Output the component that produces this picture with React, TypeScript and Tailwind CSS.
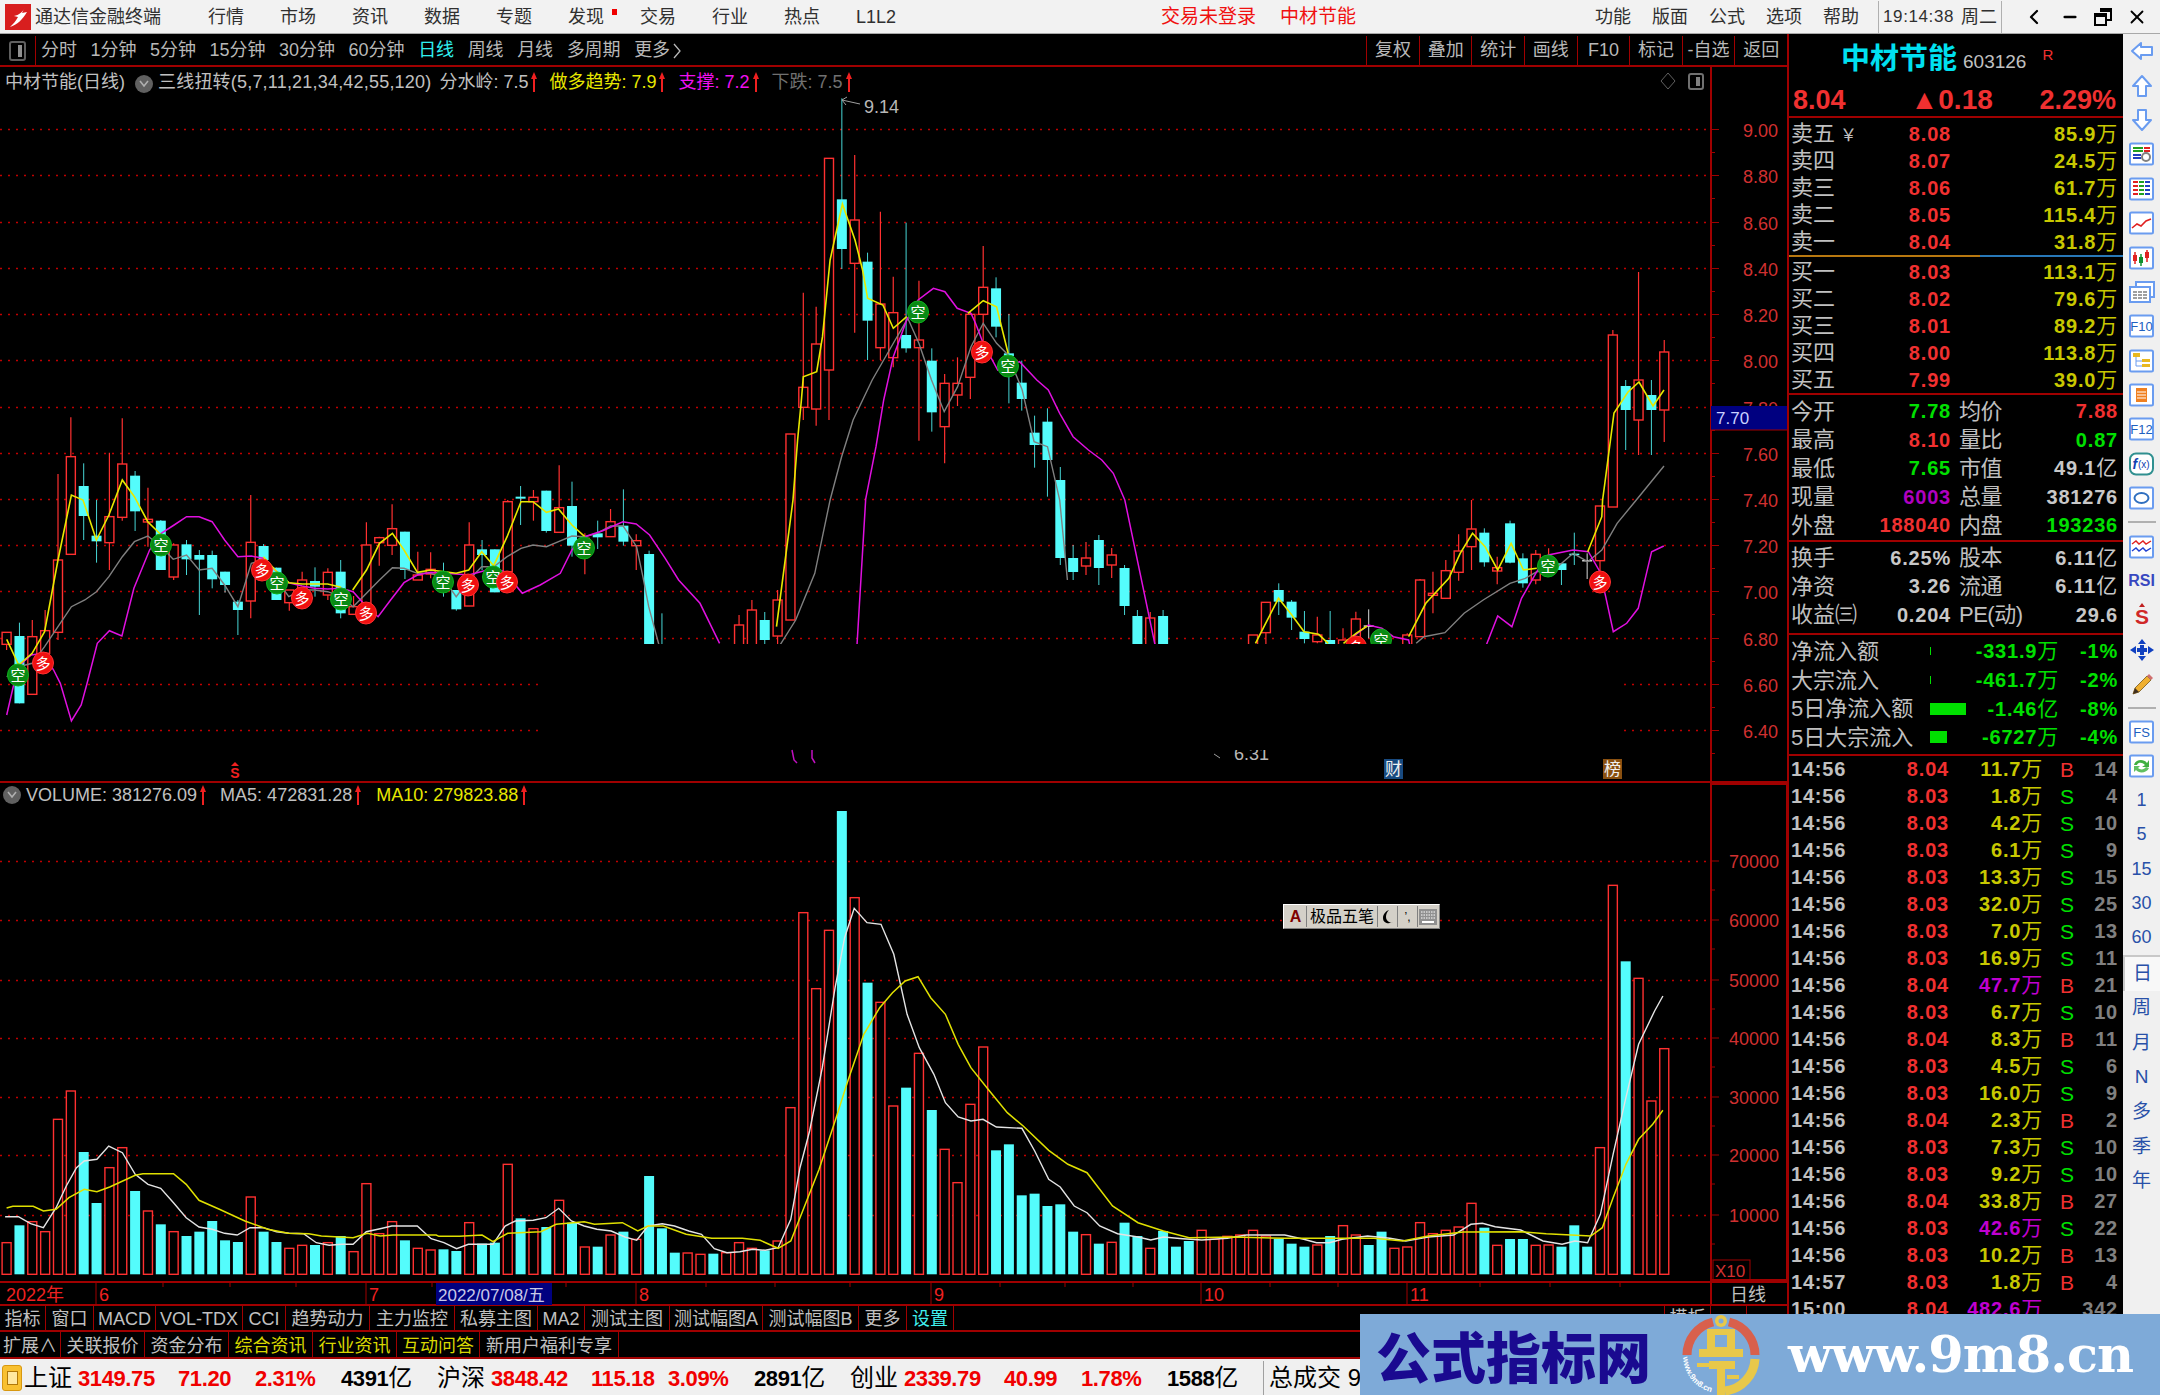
import { ChevronLeft, Minus, X } from 'lucide-react';
import type { ReactNode } from 'react';

type Kind = 'r' | 'c' | 'w';
type Row = [number, number, number, number, Kind];

const RED = '#ff3030';
const CYAN = '#54fcfc';
const LINE = '#a00000';
const DOTS = '#c00000';

// candle spacing on the x axis
const barX = (i: number) => 6.6 + 12.85 * i;

// rows are read off the picture: high, body top, body bottom, low
const group = (start: number, base: number, scale: number, rows: Row[]) =>
  rows.map(([hi, top, bot, lo, kind], n) => ({
    i: start + n,
    hi: base + hi / scale,
    top: base + top / scale,
    bot: base + bot / scale,
    lo: base + lo / scale,
    kind,
  }));

const candles = [
  ...group(0, 400, 3, [
    [697, 697, 733, 750, 'r'], [668, 708, 910, 910, 'c'], [660, 710, 883, 885, 'r'], [630, 692, 760, 770, 'r'],
    [222, 480, 697, 720, 'r'], [52, 170, 463, 463, 'r'], [190, 258, 348, 420, 'c'], [300, 407, 424, 488, 'c'],
    [158, 350, 428, 510, 'r'], [55, 192, 352, 362, 'r'], [213, 227, 334, 393, 'c'], [263, 358, 366, 440, 'r'],
    [360, 362, 510, 510, 'c'], [430, 435, 531, 540, 'r'], [420, 433, 478, 525, 'c'], [450, 465, 479, 645, 'c'],
    [452, 465, 538, 565, 'c'], [515, 515, 555, 578, 'c'], [600, 605, 630, 705, 'c'], [285, 427, 603, 655, 'r'],
    [432, 438, 480, 490, 'c'], [503, 503, 600, 600, 'c'], [570, 570, 608, 632, 'r'], [515, 540, 570, 570, 'r'],
    [502, 543, 560, 590, 'c'], [505, 517, 585, 600, 'r'], [480, 515, 640, 655, 'c'], [588, 620, 643, 643, 'r'],
    [367, 435, 620, 620, 'r'], [410, 413, 428, 497, 'r'], [313, 386, 436, 465, 'r'], [395, 395, 510, 537, 'c'],
    [455, 525, 540, 540, 'r'], [457, 508, 522, 535, 'r'], [488, 517, 560, 590, 'c'], [570, 570, 628, 632, 'c'],
    [367, 435, 618, 618, 'r'], [420, 448, 465, 510, 'c'], [448, 448, 577, 577, 'c'], [300, 305, 515, 515, 'r'],
    [258, 290, 296, 375, 'c'], [270, 292, 305, 362, 'r'], [272, 272, 393, 398, 'c'], [196, 323, 397, 397, 'r'],
    [245, 318, 437, 470, 'c'], [400, 415, 440, 523, 'r'], [362, 400, 412, 447, 'c'], [327, 365, 410, 410, 'r'],
    [268, 377, 425, 437, 'c'], [403, 422, 437, 510, 'r'], [452, 462, 800, 800, 'c'], [640, 800, 900, 900, 'c'],
  ]),
  ...group(57, 0, 1, [
    [615, 625, 660, 660, 'r'], [600, 610, 660, 660, 'r'], [612, 620, 640, 660, 'c'], [590, 600, 636, 660, 'r'],
  ]),
  ...group(61, 80, 3, [
    [1062, 1062, 1620, 1620, 'r'], [638, 922, 982, 1020, 'r'], [680, 792, 987, 1037, 'r'], [235, 235, 870, 1020, 'r'],
    [55, 358, 507, 567, 'c'], [225, 420, 550, 758, 'r'], [518, 545, 722, 840, 'c'], [395, 672, 803, 840, 'r'],
    [590, 698, 833, 862, 'r'], [428, 765, 805, 818, 'c'], [602, 780, 803, 1082, 'r'], [805, 842, 997, 1055, 'c'],
    [882, 910, 1040, 1150, 'r'], [832, 910, 945, 978, 'r'], [695, 703, 892, 957, 'r'], [498, 622, 703, 800, 'r'],
    [592, 625, 740, 772, 'c'], [702, 820, 828, 970, 'c'], [842, 908, 957, 992, 'c'], [1007, 1058, 1095, 1163, 'c'],
    [985, 1025, 1140, 1250, 'c'],
  ]),
  ...group(82, 0, 1, [
    [467, 480, 558, 565, 'c'], [545, 558, 572, 580, 'c'], [542, 558, 566, 575, 'r'], [535, 540, 568, 585, 'c'],
    [548, 555, 565, 578, 'r'], [565, 568, 606, 615, 'c'], [610, 616, 660, 660, 'c'], [612, 618, 660, 660, 'r'],
    [610, 616, 660, 660, 'c'],
  ]),
  ...group(97, 500, 3, [
    [405, 405, 600, 600, 'r'], [307, 307, 398, 500, 'r'], [250, 270, 305, 345, 'c'], [300, 305, 353, 390, 'c'],
    [333, 395, 417, 430, 'c'], [350, 405, 425, 430, 'r'], [333, 420, 500, 500, 'c'], [385, 420, 500, 500, 'r'],
    [335, 357, 415, 430, 'r'], [328, 376, 380, 415, 'w'], [395, 400, 600, 600, 'c'], [600, 600, 610, 610, 'r'],
    [400, 405, 500, 500, 'r'], [237, 240, 410, 410, 'r'], [215, 280, 286, 340, 'r'], [180, 212, 295, 295, 'r'],
    [103, 153, 217, 242, 'r'], [0, 87, 140, 210, 'r'], [85, 98, 187, 200, 'c'], [170, 203, 213, 253, 'r'],
    [62, 70, 188, 190, 'c'], [160, 175, 250, 263, 'c'], [150, 163, 240, 253, 'r'], [145, 180, 220, 230, 'r'],
    [190, 190, 210, 255, 'c'], [98, 161, 165, 195, 'c'], [160, 180, 184, 237, 'w'], [18, 18, 182, 215, 'r'],
  ]),
  ...group(125, 0, 1, [
    [330, 335, 507, 507, 'r'], [380, 386, 410, 450, 'c'], [272, 380, 420, 455, 'r'], [380, 395, 410, 455, 'c'],
    [340, 352, 410, 442, 'r'],
  ]),
];

// polyline helper, points are given in crop coordinates
const trace = (ox: number, sx: number, oy: number, pts: string) =>
  pts
    .split(' ')
    .map((p) => {
      const [x, y] = p.split(',').map(Number);
      return `${(ox + x / sx).toFixed(1)},${(oy + y / 3).toFixed(1)}`;
    })
    .join(' ');

const Z6 = (s: string) => trace(0, 2.24, 400, s);
const Z7 = (s: string) => trace(700, 2.613, 80, s);
const Z8 = (s: string) => trace(1200, 2.613, 500, s);
const V10 = (s: string) => trace(0, 1.96, 780, s);
const V11 = (s: string) => trace(800, 1.568, 780, s);

const magenta = [
  Z6('15,945 40,800 70,765 97,760 120,810 135,850 160,963 182,915 195,850 218,730 245,692 273,708 300,565 335,450 361,400 390,375 418,350 446,350 475,365 503,420 533,470 563,468 590,475 620,515 647,548 677,558 705,565 734,567 764,565 791,575 821,620 847,650 875,600 905,548 935,525 965,517 1022,522 1050,525 1106,505 1130,515 1170,580 1210,555 1255,520 1281,450 1310,410 1350,392 1395,365 1425,372 1455,405 1490,475 1520,540 1568,610 1612,730'),
  Z7('410,1700 433,1257 460,1100 480,960 505,830 540,720 570,660 610,625 640,635 672,685 708,700 720,730 740,790 778,870 835,845 880,900 910,930 940,1000 975,1070 1015,1110 1050,1140 1080,1180 1110,1260 1190,1700'),
  Z8('735,480 750,430 778,348 815,380 840,295 880,215 910,165 975,150 1015,155 1045,215 1060,290 1080,395 1115,370 1145,325 1180,155 1212,138'),
  Z8('400,410 440,375 475,385 505,410 545,420 555,470'),
];

const yellow = [
  Z6('15,718 42,795 72,760 100,695 130,480 160,285 186,300 216,420 244,345 274,240 301,290 331,365 361,405'),
  Z6('590,470 620,515 647,548 677,552 705,552 734,552 764,562'),
  Z6('790,570 821,510 850,430 879,400 905,450 935,517 965,510 1022,520 1050,510 1079,455 1106,497 1136,410 1167,305 1194,305 1224,337 1251,327 1281,375 1310,410'),
  Z7('200,1640 243,1260 255,1080 265,960 270,890 305,875 320,770 340,540 372,372 405,480 425,570 438,655 478,675 505,745 540,710'),
  Z7('700,700 740,662 775,680 805,820'),
  Z8('145,430 165,385 205,295 240,345 272,395 310,403 335,430'),
  Z8('375,430 408,400 437,378'),
  Z8('545,410 590,310 650,235 680,160 712,100 745,140 778,210 813,130 845,210 880,205'),
  Z8('1013,155 1050,50 1052,0') + ' 1605,482 1614,413 1628,392 1639,382 1653,406 1664,390',
];

const gray = [
  Z6('15,830 42,800 72,790 100,740 130,680 160,620 190,600 216,575 244,530 274,470 301,425 331,408 361,440 388,478 418,465 446,510 475,505 503,555 533,620 563,490 590,480 620,540 647,590 677,570 705,570 734,575 764,590 791,620 821,580 850,540 879,503 905,505 935,520 965,520 993,535 1022,590 1050,540 1079,500 1106,500 1136,470 1167,445 1194,435 1224,440 1251,425 1281,408 1310,410 1337,400 1368,378 1396,378 1426,440 1440,530 1453,620 1475,730 1500,800'),
  Z7('190,1730 250,1620 300,1480 340,1260 370,1130 400,1020 450,900 510,780 543,715 572,790 605,900 638,995 673,920 708,800 740,730 775,790 805,825 842,930 873,1085 908,1100 940,1260 960,1500'),
  Z8('565,430 585,410 640,398 690,340 740,300 810,250 850,235 880,215 930,205 975,160 1013,185 1050,150 1090,70 1140,0') + ' 1664,466',
];

// negative top means a falling (solid cyan) bar
const volume: number[] = [
  ...[1385, -1333, 1322, 1352, 1015, 930, -1113, -1266, 1160, 1100, -1230, 1290, -1330, 1352, -1365, -1352, -1320, -1378, -1383, 1248, -1352, -1383, 1402, 1393, -1392, 1385, -1365, 1412, 1208, 1358, 1322, -1378, 1402, 1407, -1405, -1410, 1325, -1388, -1385, 1150, -1312, 1343, -1338, 1258, -1325, 1398, -1397, 1362, -1352, 1375, -1185, -1342, -1415, 1416, 1420, -1418, 1415, 1385, 1402, -1408, 1380, 980],
  ...[395, 623, 448, -90, 350, -605, 664, 975, -920, 817, -987, 1105, 1205, 970, 798, -1108, -1090, -1243, -1238, -1275, -1270, -1352, 1361, -1388, 1384, -1325, -1365, 1402, -1350, -1397, -1380, 1348, 1375, 1366, 1362, 1348, 1365, -1373, -1388, -1397, 1392, -1365, 1334, 1362, -1392, -1352, 1402, 1398, 1325, 1358, 1348, 1338, 1267, -1340, 1393, -1374, -1374, 1393, 1392, -1397, -1333, -1397, 1100, 313, -541, 592, 960, 803],
];

const volWhite = [
  V10('10,1307 36,1307 60,1328 85,1340 110,1280 130,1215 150,1160 165,1140 190,1135 213,1095 240,1115 265,1180 290,1210 315,1222 340,1265 365,1310 390,1338 416,1345 440,1357 465,1362 490,1340 516,1340 542,1352 567,1357 595,1358 620,1385 645,1393 670,1390 692,1390 718,1352 745,1343 768,1335 818,1335 845,1373 870,1385 895,1403 918,1390 966,1390 990,1335 1010,1320 1045,1318 1070,1310 1095,1282 1120,1320 1145,1335 1170,1345 1198,1350 1225,1368 1248,1378 1270,1335 1298,1328 1322,1335 1350,1350 1375,1360 1400,1403 1425,1415 1450,1412 1475,1405 1500,1408 1525,1400 1550,1315 1568,1160') +
    ' ' +
    V11('15,1050 35,860 55,620 70,470 85,382 105,425 127,430 147,520 168,700 187,800 210,880 228,965 248,1008 268,1020 287,1015 308,1038 348,1042 368,1110 390,1195 408,1218 430,1275 450,1295 470,1335 498,1358 530,1368 550,1377 570,1368 600,1373 630,1377 670,1372 700,1362 760,1362 790,1375 810,1385 830,1385 850,1375 890,1365 925,1372 950,1380 985,1368 1025,1362 1052,1330 1070,1327 1090,1337 1130,1347 1165,1380 1195,1390 1215,1380 1235,1385 1255,1300 1275,1120 1295,950 1315,790 1340,690 1353,645'),
];

const volYellow = [
  V10('13,1281 25,1276 65,1276 85,1290 110,1285 135,1250 165,1225 190,1232 215,1218 265,1183 280,1178 340,1178 365,1210 390,1258 430,1285 480,1320 525,1345 565,1357 605,1358 630,1365 692,1370 720,1357 745,1365 770,1362 855,1362 860,1366 900,1366 945,1362 966,1382 995,1357 1060,1352 1090,1330 1145,1322 1165,1330 1220,1325 1250,1350 1270,1335 1300,1335 1345,1360 1395,1372 1455,1372 1490,1378 1525,1402 1550,1380 1568,1310') +
    ' ' +
    V11('30,1165 55,1020 75,900 100,760 125,680 145,635 165,600 185,587 205,650 228,700 248,790 268,860 295,925 325,995 350,1035 390,1108 420,1150 450,1175 490,1275 530,1325 570,1350 610,1370 680,1368 760,1372 840,1372 900,1372 945,1380 985,1365 1040,1353 1130,1352 1170,1358 1240,1365 1258,1340 1275,1250 1295,1150 1315,1075 1337,1030 1353,988'),
];

const kong = [[18, 675], [161, 545], [277, 583], [341, 599], [443, 582], [493, 577], [584, 548], [918, 312], [1008, 366], [1548, 566], [1381, 640]];
const duo = [[43, 663], [262, 570], [302, 598], [366, 613], [468, 585], [507, 582], [982, 352], [1600, 582], [1356, 647]];

const priceY = (p: number) => Math.round(129.3 + (9 - p) * 231) + 0.5;
const priceLabels = ['9.00', '8.80', '8.60', '8.40', '8.20', '8.00', '7.80', '7.60', '7.40', '7.20', '7.00', '6.80', '6.60', '6.40'];

const Marker = ({ x, y, label, fill, rim }: { x: number; y: number; label: string; fill: string; rim: string }) => (
  <g>
    <ellipse cx={x} cy={y} rx={10.5} ry={11} fill={fill} stroke={rim} strokeWidth={1} />
    <text x={x} y={y + 5.5} textAnchor="middle" fontSize={15} fill="#fff">
      {label}
    </text>
  </g>
);

const UpMark = () => (
  <svg width="10" height="22" viewBox="0 0 10 22" className="shrink-0">
    <path d="M6 1 L9 8 H7 V21 H5 V8 H3 Z" fill="#f02020" />
  </svg>
);

const Toggle = () => (
  <span className="inline-flex h-[18px] w-[18px] shrink-0 items-center justify-center rounded-full bg-[#606060] text-[#b0b0b0]">
    <svg width="10" height="8" viewBox="0 0 10 8">
      <path d="M1 1 L5 6 L9 1" fill="none" stroke="currentColor" strokeWidth="1.6" />
    </svg>
  </span>
);

const PriceChart = () => (
  <div className="relative h-[716px] border-b-2 border-[#a00000]">
    <svg width="1787" height="714" viewBox="0 67 1787 714" className="block">
      {priceLabels.map((p) => {
        const y = priceY(Number(p));
        return <line key={p} x1={0} x2={1711} y1={y} y2={y} stroke={DOTS} strokeWidth={1.4} strokeDasharray="2 6" />;
      })}
      {candles.map((c) => {
        const x = barX(c.i);
        const color = c.kind === 'r' ? RED : c.kind === 'c' ? CYAN : '#d8d8d8';
        if (c.kind === 'c' || c.kind === 'w') {
          return (
            <g key={c.i}>
              <line x1={x} x2={x} y1={c.hi} y2={c.lo} stroke={color} strokeOpacity={c.kind === 'c' ? 0.85 : 1} />
              <rect x={x - 5} y={c.top} width={10} height={Math.max(c.bot - c.top, 1.5)} fill={color} />
            </g>
          );
        }
        return (
          <g key={c.i} stroke={color}>
            <line x1={x} x2={x} y1={c.hi} y2={c.top} strokeWidth={1.2} />
            <line x1={x} x2={x} y1={c.bot} y2={c.lo} strokeWidth={1.2} />
            <rect x={x - 4.5} y={c.top} width={9} height={c.bot - c.top} fill="#000" strokeWidth={1.4} />
          </g>
        );
      })}
      {gray.map((p, n) => (
        <polyline key={n} points={p} fill="none" stroke="#808080" strokeWidth={1.4} />
      ))}
      {magenta.map((p, n) => (
        <polyline key={n} points={p} fill="none" stroke="#e010e0" strokeWidth={1.5} />
      ))}
      {yellow.map((p, n) => (
        <polyline key={n} points={p} fill="none" stroke="#e8e800" strokeWidth={1.6} />
      ))}
      {kong.map(([x, y]) => (
        <Marker key={`k${x}`} x={x} y={y} label="空" fill="#0a8a14" rim="#0cb01c" />
      ))}
      {duo.map(([x, y]) => (
        <Marker key={`d${x}`} x={x} y={y} label="多" fill="#f01010" rim="#ff3030" />
      ))}

      {/* the lower part of the chart is blanked out in the picture */}
      <rect x={538} y={644} width={1083} height={106} fill="#000" />

      <polyline points="792,750 794,760 797,763" fill="none" stroke="#c010c0" strokeWidth={1.5} />
      <polyline points="815,763 812,758 812,750" fill="none" stroke="#c010c0" strokeWidth={1.5} />

      <path d="M842 100 L860 104 M842 100 L847 97 M842 100 L846 105" stroke="#a0a0a0" fill="none" />
      <text x={864} y={113} fontSize={18} fill="#b8b8b8">9.14</text>
      <path d="M1214 754 L1220 758" stroke="#a0a0a0" fill="none" />
      <g clipPath="url(#low)">
        <text x={1234} y={760} fontSize={18} fill="#b8b8b8">6.31</text>
      </g>
      <clipPath id="low">
        <rect x={1200} y={750} width={100} height={20} />
      </clipPath>

      <path d="M235 762 l4 4 h-8 Z" fill="#f02020" />
      <text x={235} y={778} textAnchor="middle" fontSize={14} fontWeight={700} fill="#f02020">S</text>
      <rect x={1384} y={759} width={19} height={20} fill="#184a80" />
      <text x={1393.5} y={775} textAnchor="middle" fontSize={17} fill="#f0f0f0">财</text>
      <rect x={1603} y={759} width={19} height={20} fill="#8a5010" />
      <text x={1612.5} y={775} textAnchor="middle" fontSize={17} fill="#f0f0f0">榜</text>

      <line x1={1711} x2={1711} y1={67} y2={781} stroke={LINE} strokeWidth={2} />
      <path d="M1668 73 l7 8 l-7 8 l-7 -8 Z" fill="none" stroke="#606060" />
      <rect x={1689} y={74} width={14} height={15} rx={2} fill="none" stroke="#707070" strokeWidth={2} />
      <rect x={1696} y={77} width={4} height={9} fill="#808080" />

      {priceLabels.map((p) => {
        const y = priceY(Number(p));
        return (
          <g key={p}>
            <line x1={1711} x2={1719} y1={y} y2={y} stroke={LINE} />
            <line x1={1711} x2={1715} y1={y + 23} y2={y + 23} stroke={LINE} />
            <text x={1778} y={y + 7} textAnchor="end" fontSize={18} fill="#d03030">{p}</text>
          </g>
        );
      })}
      <rect x={1711} y={406} width={76} height={24} fill="#000080" />
      <line x1={1711} x2={1787} y1={430} y2={430} stroke={LINE} />
      <text x={1716} y={424} fontSize={17} fill="#c8d0ff">7.70</text>
    </svg>

    <div className="absolute left-[5px] top-[3px] flex h-[24px] items-center text-[18px] text-[#c0c0c0]">
      <span>中材节能(日线)</span>
      <span className="ml-[10px]"><Toggle /></span>
      <span className="ml-[5px] tracking-[0.2px]">三线扭转(5,7,11,21,34,42,55,120)</span>
      <span className="ml-[8px]">分水岭: 7.5</span>
      <UpMark />
      <span className="ml-[11px] text-[#e8e800]">做多趋势: 7.9</span>
      <UpMark />
      <span className="ml-[12px] text-[#f010f0]">支撑: 7.2</span>
      <UpMark />
      <span className="ml-[12px] text-[#707070]">下跌: 7.5</span>
      <UpMark />
    </div>
  </div>
);

const volumeGrid = [
  [860, '70000'], [919, '60000'], [979, '50000'], [1037, '40000'], [1096, '30000'], [1154, '20000'], [1214, '10000'],
] as const;

const VolumeChart = () => (
  <div className="relative h-[498px]">
    <svg width="1787" height="498" viewBox="0 782 1787 498" className="block">
      {volumeGrid.map(([y]) => (
        <line key={y} x1={0} x2={1711} y1={y + 0.5} y2={y + 0.5} stroke={DOTS} strokeWidth={1.4} strokeDasharray="2 6" />
      ))}
      {volume.map((top, i) => {
        const x = barX(i);
        const y = 780 + Math.abs(top) / 3;
        return top < 0 ? (
          <rect key={i} x={x - 5} y={y} width={10} height={1273.3 - y} fill={CYAN} />
        ) : (
          <rect key={i} x={x - 4.5} y={y} width={9} height={1273.3 - y} fill="#000" stroke={RED} strokeWidth={1.4} />
        );
      })}
      {volWhite.map((p, n) => (
        <polyline key={n} points={p} fill="none" stroke="#e4e4e4" strokeWidth={1.4} />
      ))}
      {volYellow.map((p, n) => (
        <polyline key={n} points={p} fill="none" stroke="#e0e000" strokeWidth={1.5} />
      ))}
      <rect x={1711} y={783} width={76} height={496} fill="#000" stroke={LINE} strokeWidth={2} />
      {volumeGrid.map(([y, label]) => (
        <g key={label}>
          <line x1={1711} x2={1719} y1={y} y2={y} stroke={LINE} />
          <line x1={1711} x2={1715} y1={y + 29} y2={y + 29} stroke={LINE} />
          <text x={1779} y={y + 7} textAnchor="end" fontSize={18} fill="#d03030">{label}</text>
        </g>
      ))}
      <rect x={1713} y={1259} width={37} height={20} fill="none" stroke={LINE} />
      <text x={1715} y={1276} fontSize={17} fill="#d03030">X10</text>
    </svg>
    <div className="absolute left-[3px] top-[1px] flex h-[22px] items-center text-[18px] text-[#c0c0c0]">
      <Toggle />
      <span className="ml-[5px]">VOLUME: 381276.09</span>
      <UpMark />
      <span className="ml-[13px]">MA5: 472831.28</span>
      <UpMark />
      <span className="ml-[14px] text-[#e8e800]">MA10: 279823.88</span>
      <UpMark />
    </div>
    {/* floating input method bar */}
    <div className="absolute left-[1283px] top-[121px] flex h-[25px] w-[157px] items-stretch border border-b-[#808080] border-l-white border-r-[#808080] border-t-white bg-[#d4d0c8] p-[1px] text-[16px] text-black">
      <span className="flex w-[22px] items-center justify-center border-r border-[#808080] font-bold text-[#800000]">A</span>
      <span className="flex w-[71px] items-center justify-center border-r border-[#808080]">极品五笔</span>
      <span className="flex w-[20px] items-center justify-center border-r border-[#808080]">
        <svg width="12" height="16" viewBox="0 0 12 16"><path d="M7 1 C3 5 3 11 7 13 C9 14 10 14 11 13 C8 15 1 15 1 9 C1 5 4 2 7 1 Z" fill="#000" /></svg>
      </span>
      <span className="flex w-[20px] items-center justify-center border-r border-[#808080] text-[12px]">’,</span>
      <span className="flex flex-1 items-center justify-center">
        <svg width="18" height="16" viewBox="0 0 18 16">
          <rect x="0" y="0" width="18" height="16" fill="#909090" />
          <path d="M2 3 H16 M2 6 H16 M2 9 H16" stroke="#fff" strokeDasharray="1.5 1" />
          <rect x="3" y="12" width="12" height="2" fill="#fff" />
        </svg>
      </span>
    </div>
  </div>
);

const DateAxis = () => (
  <svg width="1787" height="25" viewBox="0 1281 1787 25" className="block shrink-0">
    <line x1={0} x2={1787} y1={1282} y2={1282} stroke={LINE} strokeWidth={2} />
    <line x1={0} x2={1787} y1={1305} y2={1305} stroke={LINE} strokeWidth={2} />
    {[96, 366, 636, 931, 1201, 1407].map((x) => (
      <line key={x} x1={x} x2={x} y1={1283} y2={1305} stroke={LINE} />
    ))}
    {[163, 230, 296, 432, 500, 566, 706, 775, 850, 1000, 1065, 1133, 1270, 1338, 1480, 1550, 1620].map((x) => (
      <line key={x} x1={x} x2={x} y1={1283} y2={1287} stroke={LINE} />
    ))}
    <text x={6} y={1301} fontSize={18} fill="#f02020">2022年</text>
    <text x={99} y={1301} fontSize={18} fill="#f02020">6</text>
    <text x={369} y={1301} fontSize={18} fill="#f02020">7</text>
    <rect x={436} y={1283} width={116} height={22} fill="#000080" />
    <text x={438} y={1301} fontSize={17} fill="#c8c8e8">2022/07/08/五</text>
    <text x={639} y={1301} fontSize={18} fill="#f02020">8</text>
    <text x={934} y={1301} fontSize={18} fill="#f02020">9</text>
    <text x={1204} y={1301} fontSize={18} fill="#f02020">10</text>
    <text x={1410} y={1301} fontSize={18} fill="#f02020">11</text>
    <line x1={1711} x2={1711} y1={1283} y2={1305} stroke={LINE} strokeWidth={2} />
    <text x={1730} y={1301} fontSize={18} fill="#c0c0c0">日线</text>
  </svg>
);

const tabsOne: [string, number, string?][] = [
  ['指标', 46], ['窗口', 48], ['MACD', 62], ['VOL-TDX', 87], ['CCI', 43], ['趋势动力', 84], ['主力监控', 85], ['私募主图', 83],
  ['MA2', 47], ['测试主图', 85], ['测试幅图A', 93], ['测试幅图B', 96], ['更多', 48], ['设置', 47, 'text-[#40f0f0]'],
];
const tabsTwo: [string, number, string?][] = [
  ['扩展∧', 61], ['关联报价', 84], ['资金分布', 84], ['综合资讯', 84, 'text-[#d8d800]'], ['行业资讯', 84, 'text-[#d8d800]'], ['互动问答', 83, 'text-[#d8d800]'], ['新用户福利专享', 139],
];

const TabRow = ({ tabs, height, tail }: { tabs: [string, number, string?][]; height: string; tail?: ReactNode }) => (
  <div className={`flex shrink-0 border-b-2 border-[#a00000] text-[18px] text-[#c0c0c0] ${height}`}>
    {tabs.map(([label, w, color]) => (
      <div
        key={label}
        style={{ width: w }}
        className={`flex items-center justify-center overflow-hidden whitespace-nowrap border-r border-[#a00000] pt-[3px] ${color ?? ''}`}
      >
        {label}
      </div>
    ))}
    {tail}
  </div>
);

const TopBar = () => (
  <div className="flex h-[34px] shrink-0 items-center border-b border-[#a8a8a8] bg-[#f2f2f2] pt-[1px] text-[18px] text-[#303030]">
    <svg width="26" height="26" viewBox="0 0 26 26" className="ml-[5px] shrink-0">
      <rect width="26" height="26" fill="#d81e1e" />
      <path d="M20 3 C18 8 14 11 9 12 L13 13 C11 17 8 20 5 23 C12 21 18 15 22 8 L17 9 Z" fill="#fff" />
    </svg>
    <span className="ml-[4px] w-[173px]">通达信金融终端</span>
    <div className="flex gap-[36px]">
      <span>行情</span>
      <span>市场</span>
      <span>资讯</span>
      <span>数据</span>
      <span>专题</span>
      <span className="relative">
        发现
        <span className="absolute left-[44px] top-[5px] h-[6px] w-[5px] bg-[#f00000]" />
      </span>
      <span>交易</span>
      <span>行业</span>
      <span>热点</span>
      <span>L1L2</span>
    </div>
    <span className="ml-[265px] w-[119px] text-[19px] text-[#f01010]">交易未登录</span>
    <span className="w-[315px] text-[19px] text-[#f01010]">中材节能</span>
    <div className="flex w-[283px] gap-[21px]">
      <span>功能</span>
      <span>版面</span>
      <span>公式</span>
      <span>选项</span>
      <span>帮助</span>
    </div>
    <div className="flex h-full w-[124px] items-center gap-[7px] border-x border-[#b0b0b0] pl-[4px]">
      <span className="text-[17px] tracking-[0.6px]">19:14:38</span>
      <span>周二</span>
    </div>
    <div className="flex flex-1 items-center justify-around pl-[12px] pr-[4px] text-black">
      <ChevronLeft size={24} strokeWidth={2.2} />
      <Minus size={18} strokeWidth={3.5} />
      <svg width="18" height="18" viewBox="0 0 18 18">
        <path d="M6 1 H17 V12 H13 M1 6 H12 V17 H1 Z M6 3 H17 M1 8 H12" fill="none" stroke="#000" strokeWidth="2" />
      </svg>
      <X size={22} strokeWidth={2} />
    </div>
  </div>
);

const periods = ['分时', '1分钟', '5分钟', '15分钟', '30分钟', '60分钟', '日线', '周线', '月线', '多周期'];
const tools = ['复权', '叠加', '统计', '画线', 'F10', '标记', '-自选', '返回'];

const ToolRow = () => (
  <div className="flex h-[33px] shrink-0 border-b-2 border-[#a00000] pt-[2px] text-[18px] text-[#b8b8b8]">
    <div className="flex w-[36px] items-center justify-center border-r border-[#a00000]">
      <svg width="20" height="22" viewBox="0 0 20 22">
        <rect x="2" y="2" width="15" height="18" rx="2" fill="none" stroke="#606060" strokeWidth="2" />
        <rect x="10" y="5" width="4" height="12" fill="#909090" />
      </svg>
    </div>
    <div className="flex items-center gap-[13.5px] pl-[5px]">
      {periods.map((p) => (
        <span key={p} className={p === '日线' ? 'text-[#30f0f0]' : ''}>
          {p}
        </span>
      ))}
      <span className="flex items-center">
        更多
        <svg width="10" height="18" viewBox="0 0 10 18" className="ml-[2px]">
          <path d="M2 2 L8 9 L2 16" fill="none" stroke="#b8b8b8" strokeWidth="1.3" />
        </svg>
      </span>
    </div>
    <div className="ml-auto flex">
      {tools.map((t) => (
        <div key={t} className="flex w-[52.6px] items-center justify-center border-l border-[#a00000]">
          {t}
        </div>
      ))}
    </div>
  </div>
);

const Wan = ({ unit }: { unit: string }) => <span className="text-[21px] font-normal leading-none">{unit}</span>;

const sell = [
  ['卖五', '8.08', '85.9'], ['卖四', '8.07', '24.5'], ['卖三', '8.06', '61.7'], ['卖二', '8.05', '115.4'], ['卖一', '8.04', '31.8'],
];
const buy = [
  ['买一', '8.03', '113.1'], ['买二', '8.02', '79.6'], ['买三', '8.01', '89.2'], ['买四', '8.00', '113.8'], ['买五', '7.99', '39.0'],
];

const OrderRow = ({ row, extra }: { row: string[]; extra?: string }) => (
  <div className="flex h-[27px] items-center">
    <span className="w-[112px] text-[22px] font-normal tracking-normal text-[#c0c0c0]">
      {row[0]}
      {extra && <span className="ml-[5px] text-[17px]">{extra}</span>}
    </span>
    <span className="w-[48px] text-right text-[#f03030]">{row[1]}</span>
    <span className="flex-1 text-right text-[#c8c800]">
      {row[2]}
      <Wan unit="万" />
    </span>
  </div>
);

const green = 'text-[#00e000]';
const redT = 'text-[#f03030]';
const grayT = 'text-[#c8c8c8]';

const stats: [string, string, string, string, string, string][] = [
  ['今开', '7.78', green, '均价', '7.88', redT],
  ['最高', '8.10', redT, '量比', '0.87', green],
  ['最低', '7.65', green, '市值', '49.1亿', grayT],
  ['现量', '6003', 'text-[#b000c0]', '总量', '381276', grayT],
  ['外盘', '188040', redT, '内盘', '193236', green],
];
const stats2: [string, string, string, string, string, string][] = [
  ['换手', '6.25%', grayT, '股本', '6.11亿', grayT],
  ['净资', '3.26', grayT, '流通', '6.11亿', grayT],
  ['收益㈢', '0.204', grayT, 'PE(动)', '29.6', grayT],
];

const StatRow = ({ r }: { r: [string, string, string, string, string, string] }) => {
  const unit = (v: string) => (v.endsWith('亿') ? <>{v.slice(0, -1)}<Wan unit="亿" /></> : v);
  return (
    <div className="flex h-[28.5px] items-center">
      <span className="w-[72px] whitespace-nowrap text-[22px] font-normal tracking-normal text-[#c0c0c0]">{r[0]}</span>
      <span className={`w-[88px] text-right ${r[2]}`}>{r[1]}</span>
      <span className="ml-[8px] w-[72px] whitespace-nowrap text-[22px] font-normal tracking-[-0.5px] text-[#c0c0c0]">{r[3]}</span>
      <span className={`flex-1 text-right ${r[5]}`}>{unit(r[4])}</span>
    </div>
  );
};

const flows: [string, number, number, string, string, string][] = [
  ['净流入额', 1, 1, '-331.9', '万', '-1%'],
  ['大宗流入', 1, 1, '-461.7', '万', '-2%'],
  ['5日净流入额', 36, 12, '-1.46', '亿', '-8%'],
  ['5日大宗流入', 17, 12, '-6727', '万', '-4%'],
];

const ticks: [string, string, string, string, string][] = [
  ['14:56', '8.04', '11.7', 'B', '14'], ['14:56', '8.03', '1.8', 'S', '4'], ['14:56', '8.03', '4.2', 'S', '10'],
  ['14:56', '8.03', '6.1', 'S', '9'], ['14:56', '8.03', '13.3', 'S', '15'], ['14:56', '8.03', '32.0', 'S', '25'],
  ['14:56', '8.03', '7.0', 'S', '13'], ['14:56', '8.03', '16.9', 'S', '11'], ['14:56', '8.04', '47.7', 'B', '21'],
  ['14:56', '8.03', '6.7', 'S', '10'], ['14:56', '8.04', '8.3', 'B', '11'], ['14:56', '8.03', '4.5', 'S', '6'],
  ['14:56', '8.03', '16.0', 'S', '9'], ['14:56', '8.04', '2.3', 'B', '2'], ['14:56', '8.03', '7.3', 'S', '10'],
  ['14:56', '8.03', '9.2', 'S', '10'], ['14:56', '8.04', '33.8', 'B', '27'], ['14:56', '8.03', '42.6', 'S', '22'],
  ['14:56', '8.03', '10.2', 'B', '13'], ['14:57', '8.03', '1.8', 'B', '4'], ['15:00', '8.04', '482.6', '', '342'],
];

const QuotePanel = () => (
  <div className="flex w-[336px] shrink-0 flex-col overflow-hidden border-l-2 border-[#a00000] pl-[2px] pr-[5px] text-[20px] font-bold tracking-[0.8px]">
    <div className="-ml-[2px] -mr-[5px] h-[84px] shrink-0 border-b-2 border-[#a00000]">
      <div className="flex h-[42px] items-end pb-[2px] pl-[52px] font-normal">
        <span className="text-[29px] font-bold leading-none tracking-normal text-[#00e0f0]">中材节能</span>
        <span className="ml-[6px] text-[19px] leading-tight tracking-normal text-[#c0c0c0]">603126</span>
        <span className="mb-[12px] ml-[16px] text-[15px] leading-none tracking-normal text-[#f03030]">R</span>
      </div>
      <div className="flex items-center pl-[4px] pr-[7px] pt-[10px] text-[27px] leading-none tracking-normal text-[#f03030]">
        <span>8.04</span>
        <span className="ml-[65px] text-[28px]">▲0.18</span>
        <span className="ml-auto">2.29%</span>
      </div>
    </div>
    <div className="shrink-0 pt-[2px]">
      {sell.map((r, i) => (
        <OrderRow key={r[0]} row={r} extra={i === 0 ? '￥' : undefined} />
      ))}
    </div>
    <div className="-ml-[2px] -mr-[5px] mb-[1px] flex h-[2px] shrink-0">
      <div className="w-[191px] bg-[#b87810]" />
      <div className="flex-1 bg-[#2878b8]" />
    </div>
    {buy.map((r) => (
      <OrderRow key={r[0]} row={r} />
    ))}
    <div className="-ml-[2px] -mr-[5px] mb-[2px] h-[2px] shrink-0 bg-[#a00000]" />
    {stats.map((r) => (
      <StatRow key={r[0]} r={r} />
    ))}
    <div className="-ml-[2px] -mr-[5px] mb-[2px] h-[2px] shrink-0 bg-[#a00000]" />
    {stats2.map((r) => (
      <StatRow key={r[0]} r={r} />
    ))}
    <div className="-ml-[2px] -mr-[5px] mb-[2px] mt-[4px] h-[2px] shrink-0 bg-[#a00000]" />
    {flows.map(([label, w, h, val, unit, pct]) => (
      <div key={label} className="flex h-[28.7px] items-center">
        <span className="w-[139px] whitespace-nowrap text-[22px] font-normal tracking-normal text-[#c0c0c0]">{label}</span>
        <span className="flex w-[44px] items-center">
          <span style={{ width: w, height: h === 1 ? 8 : h }} className="bg-[#00e000]" />
        </span>
        <span className={`w-[85px] text-right ${green}`}>
          {val}
          <Wan unit={unit} />
        </span>
        <span className={`flex-1 text-right ${green}`}>{pct}</span>
      </div>
    ))}
    <div className="-ml-[2px] -mr-[5px] mt-[2px] h-[2px] shrink-0 bg-[#a00000]" />
    {ticks.map(([time, price, vol, side, count], i) => (
      <div key={i} className="flex h-[27px] shrink-0 items-center">
        <span className="w-[112px] text-[#c0c0c0]">{time}</span>
        <span className="w-[46px] text-right text-[#f03030]">{price}</span>
        <span className={`w-[94px] text-right ${vol === '47.7' || vol === '42.6' || vol === '482.6' ? 'text-[#c000d0]' : 'text-[#c8c800]'}`}>
          {vol}
          <Wan unit="万" />
        </span>
        <span className={`ml-[17px] w-[14px] text-[21px] font-normal ${side === 'B' ? 'text-[#f03030]' : 'text-[#00e000]'}`}>{side}</span>
        <span className="flex-1 text-right text-[#808080]">{count}</span>
      </div>
    ))}
  </div>
);

const Box = ({ children }: { children: ReactNode }) => (
  <svg width="25" height="24" viewBox="0 0 25 24">
    <rect x="1" y="1.5" width="23" height="21" rx="1.5" fill="#fff" stroke="#6a9cf0" strokeWidth="2" />
    {children}
  </svg>
);

const Arrow = ({ d, w = 24, h = 24 }: { d: string; w?: number; h?: number }) => (
  <svg width={w} height={h} viewBox={`0 0 ${w} ${h}`}>
    <path d={d} fill="#fff" stroke="#6a9cf0" strokeWidth="2" strokeLinejoin="round" />
  </svg>
);

const railTop: ReactNode[] = [
  <Arrow d="M2 12 L11 4 V8 H22 V16 H11 V20 Z" />,
  <Arrow d="M12 2 L21 12 H16 V22 H8 V12 H3 Z" />,
  <Arrow d="M12 22 L21 12 H16 V2 H8 V12 H3 Z" />,
  <Box>
    <path d="M4 6 H14 M4 9 H14" stroke="#20a020" strokeWidth="2" />
    <path d="M15 6 H21 M15 9 H21" stroke="#e02020" strokeWidth="2" />
    <path d="M4 13 H12 M4 16 H12" stroke="#2040c0" strokeWidth="2" />
    <circle cx="17" cy="15" r="4" fill="none" stroke="#808080" strokeWidth="2" />
  </Box>,
  <Box>
    {[5, 9, 13, 17].map((y) => (
      <g key={y}>
        <path d={`M4 ${y} H9`} stroke="#e02020" strokeWidth="2" />
        <path d={`M10 ${y} H15`} stroke="#20a020" strokeWidth="2" />
        <path d={`M16 ${y} H21`} stroke="#2040c0" strokeWidth="2" />
      </g>
    ))}
  </Box>,
  <Box>
    <path d="M3 17 L8 13 L12 15 L17 10 L22 8" fill="none" stroke="#e02020" strokeWidth="1.6" />
  </Box>,
  <Box>
    <path d="M6 6 V18 M18 4 V16" stroke="#e02020" strokeWidth="1.5" />
    <rect x="4" y="9" width="4" height="6" fill="#e02020" />
    <rect x="16" y="6" width="4" height="6" fill="#e02020" />
    <path d="M12 8 V20" stroke="#109030" strokeWidth="1.5" />
    <rect x="10" y="11" width="4" height="6" fill="#109030" />
  </Box>,
  <svg width="26" height="24" viewBox="0 0 26 24">
    <rect x="7" y="2" width="18" height="15" fill="#fff" stroke="#6a9cf0" strokeWidth="2" />
    <rect x="1" y="7" width="20" height="15" fill="#fff" stroke="#6a9cf0" strokeWidth="2" />
    <path d="M4 12 H18 M4 15 H18 M4 18 H18" stroke="#808080" strokeWidth="1.6" strokeDasharray="4 1" />
  </svg>,
  <Box>
    <text x="12.5" y="17" textAnchor="middle" fontSize="13" fill="#2060c0">F10</text>
  </Box>,
  <Box>
    <rect x="4" y="4" width="7" height="4" fill="#e8b820" />
    <rect x="13" y="10" width="8" height="3" fill="#e8b820" />
    <rect x="13" y="15" width="8" height="3" fill="#e8b820" />
    <path d="M7 8 V17 H13 M7 12 H13" fill="none" stroke="#6a9cf0" />
  </Box>,
  <Box>
    <rect x="7" y="5" width="11" height="14" fill="#f08020" />
    <path d="M8 9 H17 M8 12 H17 M8 15 H17" stroke="#fff" strokeWidth="1.2" />
  </Box>,
  <Box>
    <text x="12.5" y="17" textAnchor="middle" fontSize="13" fill="#2060c0">F12</text>
  </Box>,
  <svg width="25" height="24" viewBox="0 0 25 24">
    <rect x="1" y="1.5" width="23" height="21" rx="6" fill="#fff" stroke="#309090" strokeWidth="2" />
    <text x="3.5" y="17" fontSize="14" fontStyle="italic" fontWeight="700" fill="#1040b0">f</text>
    <text x="9" y="16" fontSize="10" fill="#1040b0">(x)</text>
  </svg>,
  <Box>
    <ellipse cx="12.5" cy="12" rx="7" ry="5" fill="none" stroke="#3070c0" strokeWidth="2" />
  </Box>,
];

const railMid: ReactNode[] = [
  <Box>
    <path d="M3 9 L7 6 L10 9 L14 6 L17 9 L22 6" fill="none" stroke="#e02020" strokeWidth="1.4" />
    <path d="M3 16 L7 13 L10 16 L14 13 L17 16 L22 13" fill="none" stroke="#2040d0" strokeWidth="1.4" />
  </Box>,
  <span className="text-[16px] font-bold text-[#3848c0]">RSI</span>,
  <svg width="24" height="26" viewBox="0 0 24 26">
    <path d="M12 1 L15 5 H9 Z" fill="#c02020" />
    <text x="12" y="22" textAnchor="middle" fontSize="21" fontWeight="700" fill="#d02828">S</text>
  </svg>,
  <svg width="26" height="24" viewBox="0 0 26 24" fill="#1040c0">
    <path d="M13 1 L17 6 H9 Z M13 23 L17 18 H9 Z M1 12 L7 8 V16 Z M25 12 L19 8 V16 Z" />
    <rect x="8" y="10" width="10" height="4" />
    <rect x="11" y="7" width="4" height="10" />
  </svg>,
  <svg width="24" height="24" viewBox="0 0 24 24">
    <path d="M3 22 L5 16 L17 4 L21 8 L9 20 Z" fill="#f0b030" stroke="#907030" />
    <path d="M3 22 L5 16 L9 20 Z" fill="#403020" />
    <path d="M17 4 L19 2 L23 6 L21 8 Z" fill="#d07070" />
  </svg>,
];

const railText = ['1', '5', '15', '30', '60'];
const railCjk = ['周', '月', 'N', '多', '季', '年'];

const Rail = () => (
  <div className="flex w-[37px] shrink-0 flex-col items-center overflow-hidden bg-[#f0f0f0] text-[18px] text-[#2850a8]">
    {railTop.map((icon, i) => (
      <div key={i} className="flex h-[34.4px] w-full shrink-0 items-center justify-center">{icon}</div>
    ))}
    <div className="flex h-[14px] w-full shrink-0 items-center justify-center"><div className="h-[2px] w-[28px] bg-[#b0b0b0]" /></div>
    {railMid.map((icon, i) => (
      <div key={i} className="flex h-[34.4px] w-full shrink-0 items-center justify-center">{icon}</div>
    ))}
    <div className="flex h-[13px] w-full shrink-0 items-center justify-center"><div className="h-[2px] w-[28px] bg-[#b0b0b0]" /></div>
    <div className="flex h-[34.4px] w-full shrink-0 items-center justify-center">
      <Box>
        <text x="12.5" y="17" textAnchor="middle" fontSize="13" fill="#2060c0">FS</text>
      </Box>
    </div>
    <div className="flex h-[34.4px] w-full shrink-0 items-center justify-center">
      <Box>
        <path d="M5 11 C6 6 14 4 18 9 L20 6 V13 H13 L16 11 C13 8 9 8 8 11 Z" fill="#40b040" />
        <path d="M20 14 C18 19 10 20 7 16 L5 18 V12 H11 L9 14 C11 16 15 16 17 13 Z" fill="#60c060" />
      </Box>
    </div>
    {railText.map((t) => (
      <div key={t} className="flex h-[34.4px] w-full shrink-0 items-center justify-center">{t}</div>
    ))}
    <div className="flex h-[36px] w-full shrink-0 items-center justify-center border-l-2 border-t-2 border-[#c8c8c8] bg-[#f8f8f8] text-[19px]">日</div>
    {railCjk.map((t) => (
      <div key={t} className="flex h-[34.6px] w-full shrink-0 items-center justify-center text-[19px]">{t}</div>
    ))}
  </div>
);

const indices = [
  ['上证', '3149.75', '71.20', '2.31%', '4391'],
  ['沪深', '3848.42', '115.18', '3.09%', '2891'],
  ['创业', '2339.79', '40.99', '1.78%', '1588'],
];

const StatusBar = () => (
  <div className="flex h-[36px] shrink-0 items-center overflow-hidden whitespace-nowrap bg-[#f0f0f0] pt-[2px] text-[22px] text-black">
    <div className="ml-[2px] flex h-[26px] w-[20px] shrink-0 items-center justify-center rounded-[3px] border border-[#d89810] bg-[#f8c030]">
      <div className="h-[14px] w-[11px] border border-[#b07808] bg-[#ffe8a0]" />
    </div>
    <div className="ml-[2px] flex shrink-0">
      {indices.map(([name, v, c, p, a]) => (
        <div key={name} className="flex items-center">
          <span className="w-[54px] text-[24px]">{name}</span>
          <span className="w-[100px] font-bold tracking-[-0.4px] text-[#f00000]">{v}</span>
          <span className="w-[77px] font-bold tracking-[-0.4px] text-[#f00000]">{c}</span>
          <span className="w-[86px] font-bold tracking-[-0.4px] text-[#f00000]">{p}</span>
          <span className="w-[96px] font-bold tracking-[-0.4px]">{a}<span className="text-[24px] font-normal">亿</span></span>
        </div>
      ))}
    </div>
    <div className="flex h-full items-center border-l border-[#a0a0a0] pl-[5px] text-[24px]">总成交 9</div>
  </div>
);

const Watermark = () => (
  <div className="absolute bottom-0 left-[1360px] right-0 flex h-[81px] items-center bg-[#7eaad8]">
    <span className="ml-[16px] w-[280px] whitespace-nowrap text-[55px] font-black leading-none text-[#1a0a90] [font-family:'Noto_Sans_CJK_SC',sans-serif]">
      公式指标网
    </span>
    <svg width="84" height="84" viewBox="0 0 84 84" className="ml-[23px] shrink-0">
      <path d="M8 42 A34 34 0 0 1 34 9" fill="none" stroke="#d8604c" strokeWidth="9" />
      <path d="M50 9 A34 34 0 0 1 76 42" fill="none" stroke="#d8604c" strokeWidth="9" />
      <path d="M76 46 A34 34 0 0 1 46 78" fill="none" stroke="#e8c84a" strokeWidth="9" />
      <circle cx="42" cy="8" r="6" fill="#e8c84a" />
      <circle cx="42" cy="8" r="2.5" fill="#7eaad8" />
      <path d="M28 16 H56 V36 H64 V44 H20 V36 H28 Z M36 22 V34 H48 V22 Z" fill="#e8c84a" fillRule="evenodd" />
      <path d="M30 48 H56 V56 H46 V84 H38 V56 H30 Z" fill="#e8c84a" />
      <path d="M18 50 H36 V54 H18 Z M48 62 H60 V66 H48 Z" fill="#e8c84a" />
      <path id="ringText" d="M4 44 A38 38 0 0 0 36 80" fill="none" />
      <text fontSize="8" fontWeight="700" fill="#fff">
        <textPath href="#ringText">www.9m8.cn</textPath>
      </text>
    </svg>
    <span className="ml-[25px] whitespace-nowrap text-[51px] font-bold leading-tight tracking-[-1px] text-white [font-family:'DejaVu_Serif',serif]">
      www.9m8.cn
    </span>
  </div>
);

export default function App() {
  return (
    <div className="relative flex h-[1395px] w-[2160px] flex-col overflow-hidden bg-black [font-family:'Liberation_Sans','Noto_Sans_CJK_SC',sans-serif]">
      <TopBar />
      <div className="flex h-[1325px] shrink-0 overflow-hidden">
        <div className="flex w-[1787px] shrink-0 flex-col">
          <ToolRow />
          <PriceChart />
          <VolumeChart />
          <DateAxis />
          <TabRow
            tabs={tabsOne}
            height="h-[26px]"
            tail={
              <div className="ml-auto flex">
                <div className="flex w-[47px] items-center justify-center border-x border-[#a00000]">模板</div>
                <div className="w-[36px] border-r border-[#a00000]" />
                <div className="w-[40px]" />
              </div>
            }
          />
          <TabRow tabs={tabsTwo} height="h-[27px]" />
        </div>
        <QuotePanel />
        <Rail />
      </div>
      <StatusBar />
      <Watermark />
    </div>
  );
}
